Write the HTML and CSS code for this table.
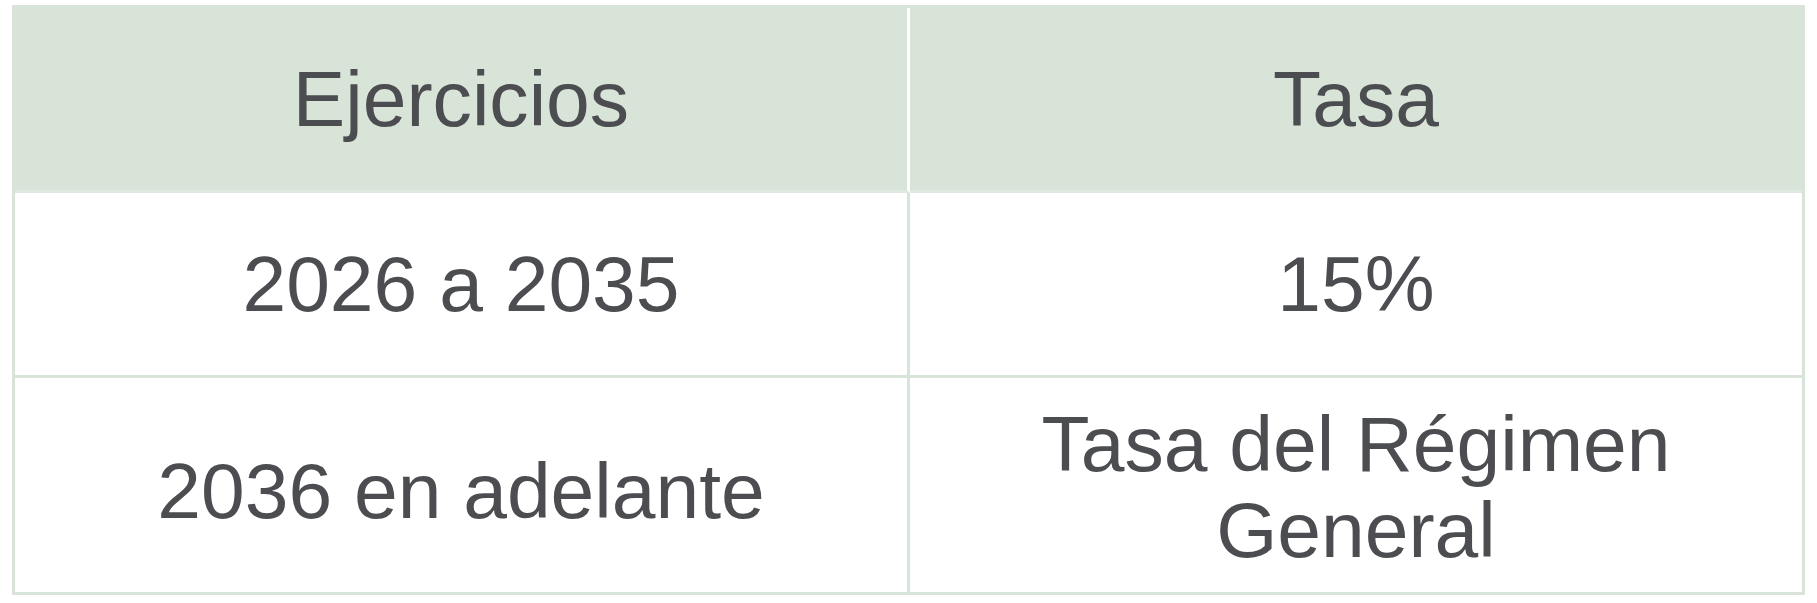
FILE: index.html
```html
<!DOCTYPE html>
<html lang="es">
<head>
<meta charset="utf-8">
<title>Tasas</title>
<link rel="stylesheet" href="styles.css">
</head>
<body>
<div class="tbl">
  <div class="cell head c1">Ejercicios</div>
  <div class="cell head c2">Tasa</div>
  <div class="cell row1 c1">2026 a 2035</div>
  <div class="cell row1 c2">15%</div>
  <div class="cell row2 c1">2036 en adelante</div>
  <div class="cell row2 c2">Tasa del Régimen<br>General</div>
</div>
</body>
</html>
```
FILE: styles.css
```css
html, body {
  margin: 0;
  padding: 0;
  background: #ffffff;
}
body {
  padding: 5px 0 0 12px;
}
.tbl {
  width: 1793px;
  box-sizing: border-box;
  border: 3px solid #d9e4d9;
  display: grid;
  grid-template-columns: 895px 892px;
  grid-template-rows: 185px 185px 214px;
  font-family: "Liberation Sans", Arial, sans-serif;
  font-size: 78.6px;
  line-height: 86px;
  color: #4c4d50;
}
.cell {
  display: flex;
  align-items: center;
  justify-content: center;
  text-align: center;
  box-sizing: border-box;
}
.c1 {
  border-right: 3px solid #d9e4d9;
}
.head {
  background: #d9e4d9;
  border-bottom: 3px solid #dfe9df;
}
.head.c1 {
  border-right-color: #ffffff;
}
.row1 {
  border-bottom: 3px solid #d9e4d9;
}
.row2.c1 {
  padding-top: 11px;
}
.row2.c2 {
  padding-top: 4px;
}
```
